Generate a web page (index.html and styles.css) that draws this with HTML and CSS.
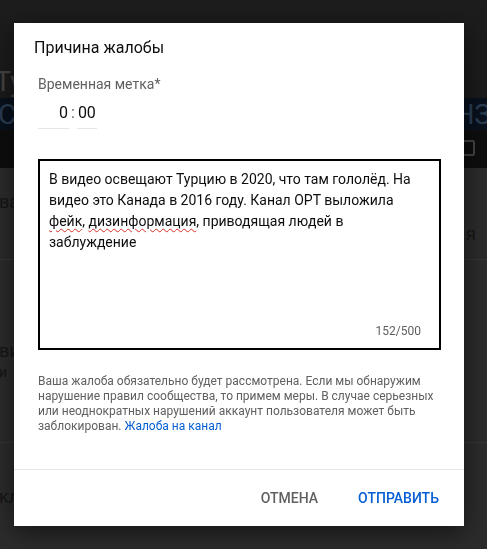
FILE: index.html
```html
<!DOCTYPE html>
<html lang="ru">
<head>
<meta charset="utf-8">
<title>Причина жалобы</title>
<link rel="stylesheet" href="styles.css">
</head>
<body>
<div class="page">
  <div class="video">
    <div class="video-title">Турция</div>
    <div class="banner">
      <span class="banner-left">СОБЫТИЯ</span>
      <span class="banner-right">НЗ</span>
    </div>
    <div class="controls">
      <span class="ctrl-icon"></span>
    </div>
  </div>
  <div class="content">
    <div class="row row-a">
      <div class="frag-left big">ва</div>
      <div class="frag-right big">я</div>
    </div>
    <div class="row row-b">
      <div class="frag-left big">вин</div>
      <div class="frag-left small">и</div>
    </div>
    <div class="row row-c">
      <div class="frag-left big">кл</div>
    </div>
  </div>
</div>

<div class="dialog" role="dialog">
  <div class="dialog-body">
    <h2 class="title">Причина жалобы</h2>
    <div class="label">Временная метка*</div>
    <div class="time">
      <span class="time-part time-min">0</span>
      <span class="time-sep">:</span>
      <span class="time-part time-sec">00</span>
    </div>
    <div class="field">
      <div class="field-text">В видео освещают Турцию в 2020, что там гололёд. На видео это Канада в 2016 году. Канал ОРТ выложила <span class="spell">фейк</span>, <span class="spell">дизинформация</span>, приводящая людей в заблуждение</div>
      <div class="counter">152/500</div>
    </div>
    <p class="notice">Ваша жалоба обязательно будет рассмотрена. Если мы обнаружим нарушение правил сообщества, то примем меры. В случае серьезных или неоднократных нарушений аккаунт пользователя может быть заблокирован. <a class="link" href="#">Жалоба на канал</a></p>
  </div>
  <div class="dialog-footer">
    <button class="btn btn-cancel">Отмена</button>
    <button class="btn btn-submit">Отправить</button>
  </div>
</div>
</body>
</html>
```

FILE: styles.css
```css
* { box-sizing: border-box; }
html, body { margin: 0; padding: 0; }
body {
  background: #2c2c2c;
  font-family: Roboto, "Noto Sans", Arial, sans-serif;
  overflow: hidden;
  width: 487px;
  height: 549px;
}

/* background page */
.page { display: flex; flex-direction: column; }
.video {
  height: 168px;
  display: flex;
  flex-direction: column;
  background: linear-gradient(180deg, #1d1d1d 0%, #1a1a1a 100%);
}
.video-title {
  height: 98px;
  padding-top: 67px;
  margin-left: -5px;
  font-size: 27px;
  line-height: 30px;
  color: #454545;
  white-space: nowrap;
}
.banner {
  height: 32px;
  background: #08111d;
  display: flex;
  justify-content: space-between;
  align-items: center;
  font-size: 28px;
  font-weight: 400;
  color: #2b3d52;
  white-space: nowrap;
  overflow: hidden;
}
.banner-left { margin-left: -2px; }
.banner-right { margin-right: -4px; }
.controls {
  flex: 1;
  background: #0e0e0e;
  display: flex;
  justify-content: flex-end;
  align-items: flex-start;
  padding: 10px 12px 0 0;
}
.ctrl-icon {
  width: 14px;
  height: 16px;
  border: 2px solid #444;
  border-radius: 2px;
}
.content { display: flex; flex-direction: column; }
.row {
  border-bottom: 1px solid #363636;
  display: flex;
  flex-direction: column;
  white-space: nowrap;
}
.row-a { height: 92px; padding-top: 22px; }
.row-b { height: 183px; padding-top: 79px; }
.row-c { padding-top: 42px; border-bottom: 0; }
.frag-left { color: #161616; margin-left: -1px; }
.frag-right { color: #161616; align-self: flex-end; margin-right: 11px; margin-top: 8px; }
.big { font-size: 18px; line-height: 24px; }
.small { font-size: 14px; line-height: 18px; }

/* dialog overlay */
.dialog {
  position: fixed;
  left: 14px;
  top: 23px;
  width: 450px;
  height: 503px;
  background: #fff;
  display: flex;
  flex-direction: column;
  box-shadow: 0 6px 24px rgba(0, 0, 0, 0.55);
}
.dialog-body {
  flex: 1;
  padding: 13px 23px 0 24px;
  display: flex;
  flex-direction: column;
}
.title {
  margin: 0 0 16px -4px;
  font-size: 16px;
  line-height: 24px;
  font-weight: 400;
  color: #0d0d0d;
}
.label {
  font-size: 14px;
  line-height: 18px;
  margin-top: -1px;
  color: #606060;
}
.time {
  display: flex;
  align-items: flex-end;
  margin-top: 10px;
  font-size: 16px;
  line-height: 20px;
  color: #0d0d0d;
}
.time-part {
  border-bottom: 1px solid #e6e6e6;
  padding-bottom: 5px;
}
.time-min { width: 31px; text-align: right; padding-right: 1px; }
.time-sep { padding: 0 2px 6px 2px; color: #606060; }
.time-sec { width: 20px; text-align: left; padding-left: 1px; }
.field {
  margin-top: 30px;
  height: 191px;
  border: 2px solid #000;
  padding: 8px 9px 0 9px;
  display: flex;
  flex-direction: column;
}
.field-text {
  flex: 1;
  font-size: 14px;
  line-height: 21px;
  color: #0d0d0d;
}
.spell {
  text-decoration: underline wavy #d93025;
  text-decoration-thickness: 1px;
  text-underline-offset: 2px;
}
.counter {
  align-self: flex-end;
  margin-right: 9px;
  margin-bottom: 9px;
  font-size: 12px;
  line-height: 16px;
  color: #606060;
}
.notice {
  margin: 24px 0 0 0;
  font-size: 12px;
  line-height: 15px;
  color: #606060;
}
.link { color: #065fd4; text-decoration: none; }
.dialog-footer {
  height: 57px;
  border-top: 1px solid #e5e5e5;
  display: flex;
  justify-content: flex-end;
  align-items: center;
  gap: 16px;
  padding-right: 13px;
}
.btn {
  background: none;
  border: 0;
  padding: 10px 12px;
  font-family: Roboto, "Noto Sans", Arial, sans-serif;
  font-size: 14px;
  font-weight: 500;
  text-transform: uppercase;
  letter-spacing: 0;
  cursor: pointer;
}
.btn-cancel { color: #606060; }
.btn-submit { color: #065fd4; }
```
